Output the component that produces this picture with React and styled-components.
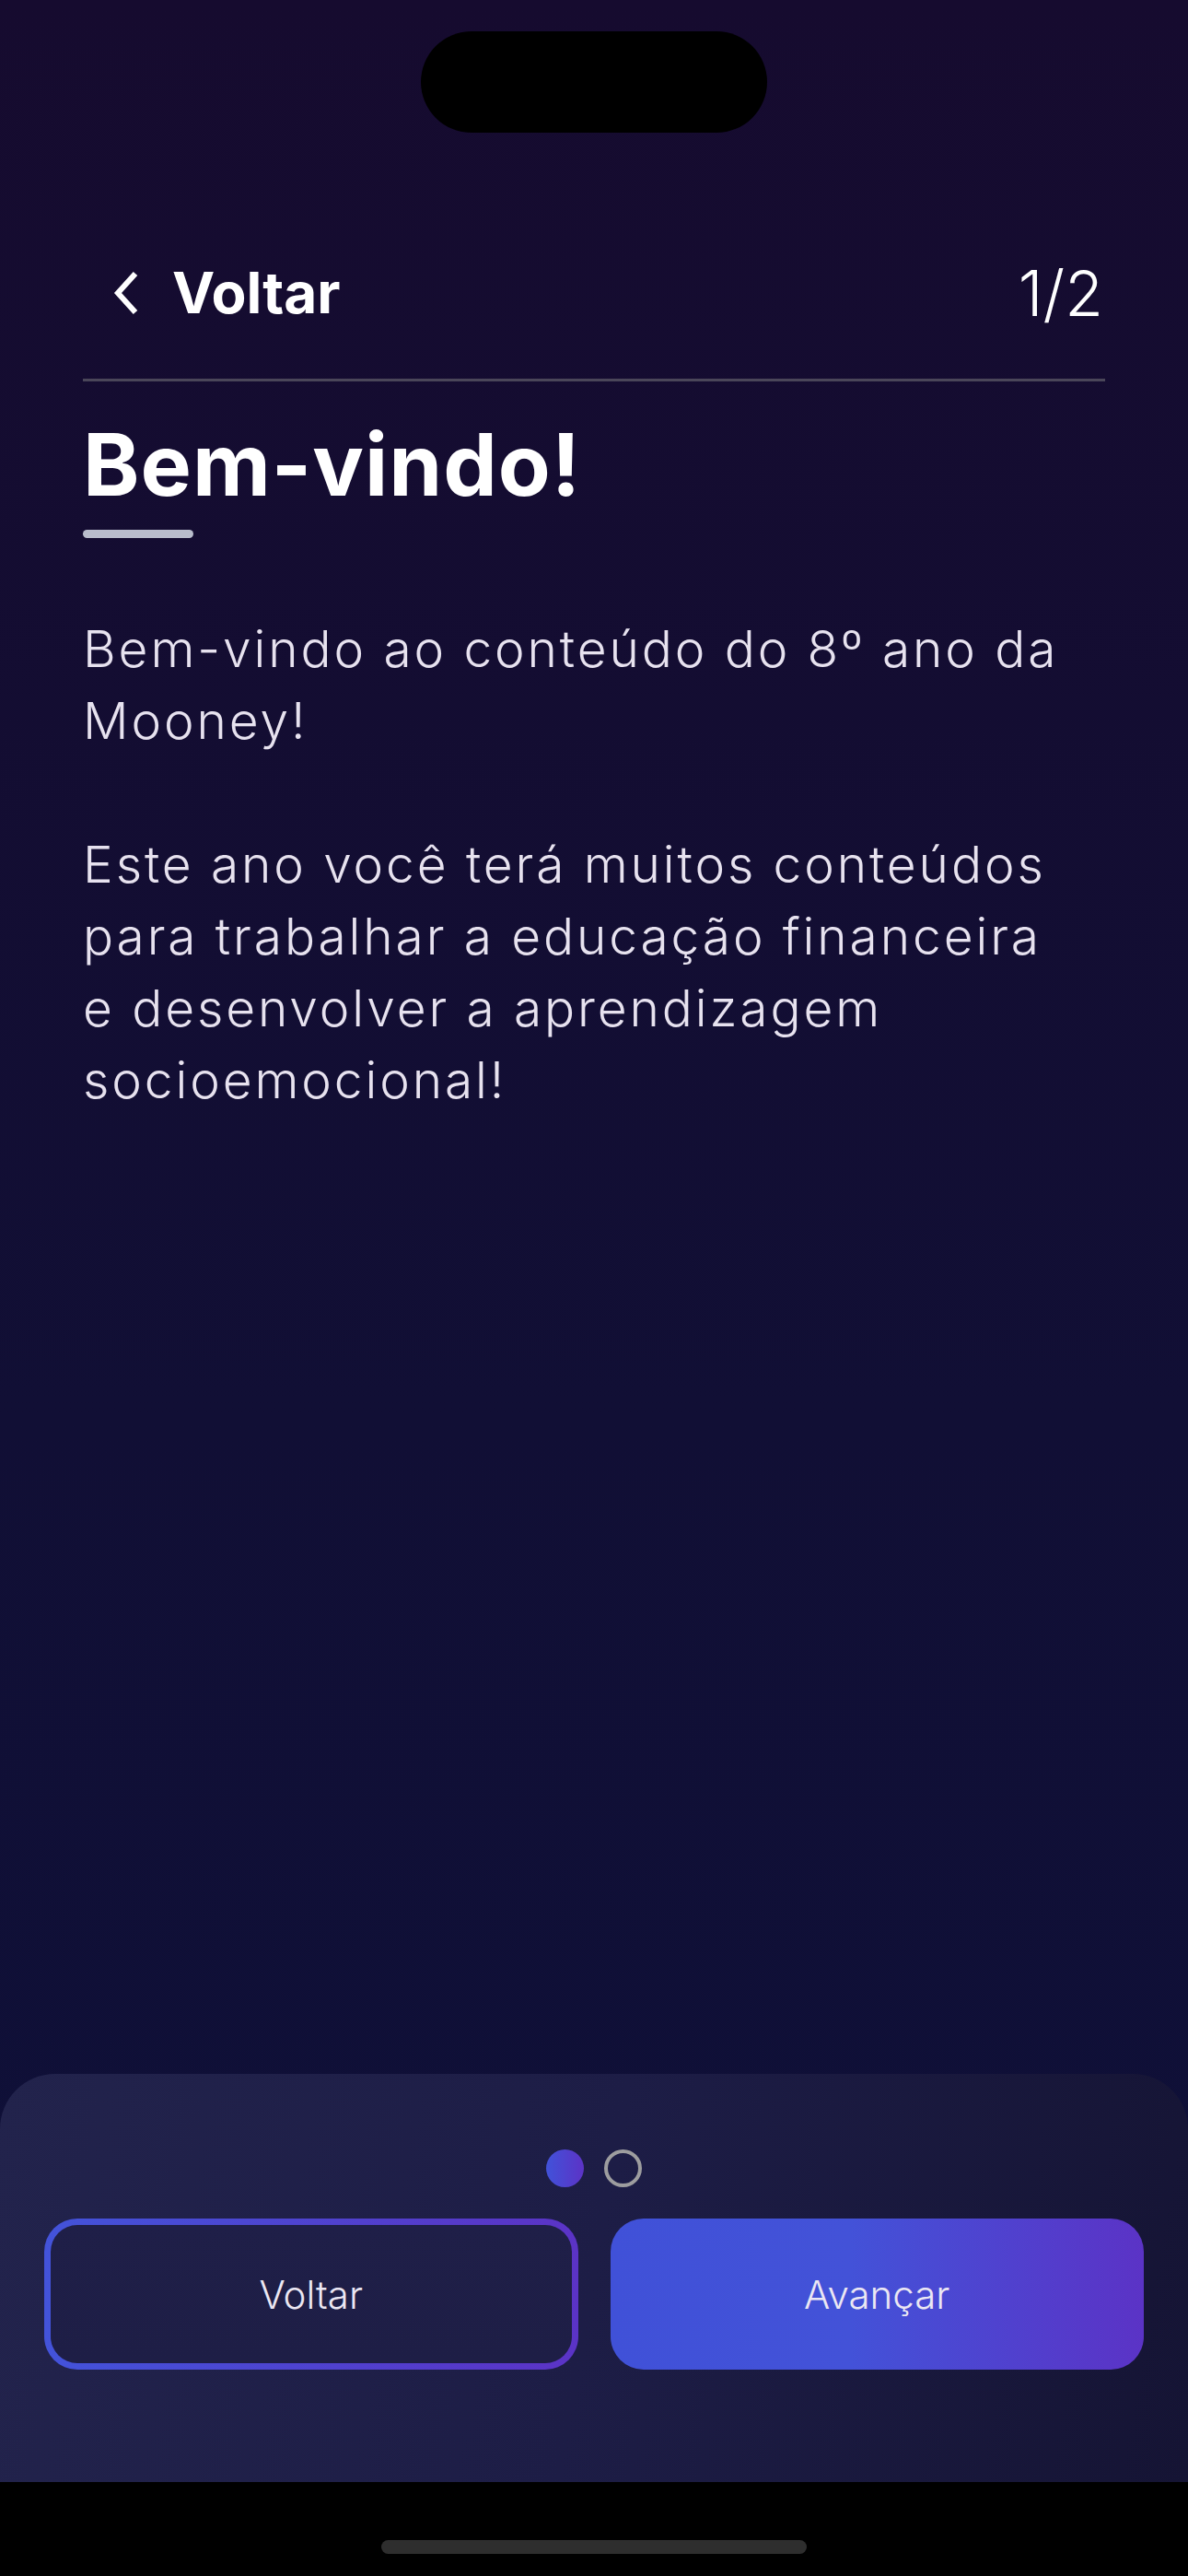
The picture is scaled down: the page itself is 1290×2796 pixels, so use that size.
import React from 'react';
import styled, { createGlobalStyle } from 'styled-components';

const GlobalStyle = createGlobalStyle`
  html, body {
    margin: 0;
    padding: 0;
    background: #000;
  }
  * {
    box-sizing: border-box;
  }
`;

const paragraphs = [
  'Bem-vindo ao conteúdo do 8º ano da\nMooney!',
  'Este ano você terá muitos conteúdos\npara trabalhar a educação financeira\ne desenvolver a aprendizagem\nsocioemocional!',
];

const App = () => {
  return (
    <Screen>
      <GlobalStyle />
      <TopBar>
        <Island />
      </TopBar>

      <Header>
        <BackLink>
          <svg width="28" height="48" viewBox="0 0 28 48" fill="none">
            <polyline points="24,3 5,24 24,45" stroke="#fff" strokeWidth="6" strokeLinejoin="miter" />
          </svg>
          <BackText>Voltar</BackText>
        </BackLink>
        <Counter>1/2</Counter>
      </Header>
      <Divider />

      <Content>
        <Title>Bem-vindo!</Title>
        <TitleBar />
        {paragraphs.map((p, i) => (
          <Paragraph key={i}>{p}</Paragraph>
        ))}
      </Content>

      <BottomPanel>
        <Dots>
          <Dot $active />
          <Dot />
        </Dots>
        <Actions>
          <OutlineButton>Voltar</OutlineButton>
          <FilledButton>Avançar</FilledButton>
        </Actions>
      </BottomPanel>

      <HomeArea>
        <HomeIndicator />
      </HomeArea>
    </Screen>
  );
};

export default App;

const Screen = styled.div`
  display: flex;
  flex-direction: column;
  width: 1290px;
  min-height: 2796px;
  background: linear-gradient(180deg, #160b2f 0%, #110f35 55%, #0e1039 100%);
  font-family: Inter, "Noto Sans", sans-serif;
  color: #fff;
`;

const TopBar = styled.div`
  display: flex;
  justify-content: center;
  height: 287px;
  padding-top: 34px;
`;

const Island = styled.div`
  width: 376px;
  height: 110px;
  border-radius: 55px;
  background: #000;
`;

const Header = styled.div`
  display: flex;
  justify-content: space-between;
  align-items: center;
  height: 62px;
  margin: 0 90px;
  padding: 0 2px 0 33px;
`;

const BackLink = styled.div`
  display: flex;
  align-items: center;
  gap: 36px;
`;

const BackText = styled.span`
  font-size: 62px;
  font-weight: 700;
  line-height: 62px;
`;

const Counter = styled.span`
  font-size: 68px;
  font-weight: 300;
  line-height: 62px;
`;

const Divider = styled.div`
  height: 3px;
  margin: 62px 90px 0;
  background: #4a4659;
`;

const Content = styled.div`
  flex: 1;
  display: flex;
  flex-direction: column;
  align-items: flex-start;
  padding: 35px 90px 0;
`;

const Title = styled.h1`
  margin: 0;
  font-size: 93px;
  font-weight: 700;
  line-height: 1.2;
  letter-spacing: 1px;
  color: #fff;
`;

const TitleBar = styled.div`
  width: 120px;
  height: 9px;
  margin-top: 14px;
  border-radius: 5px;
  background: #b9bdcc;
`;

const Paragraph = styled.p`
  margin: 81px 0 0;
  white-space: pre-line;
  font-size: 55px;
  font-weight: 300;
  line-height: 78px;
  letter-spacing: 2.9px;
  color: #e7e2ef;

  & + & {
    margin-top: 78px;
  }
`;

const BottomPanel = styled.div`
  display: flex;
  flex-direction: column;
  align-items: center;
  gap: 34px;
  height: 443px;
  padding: 82px 48px 0;
  border-radius: 60px 60px 0 0;
  background: linear-gradient(100deg, #22234c 0%, #1d1d46 50%, #151434 100%);
`;

const Dots = styled.div`
  display: flex;
  gap: 22px;
`;

const Dot = styled.div`
  width: 41px;
  height: 41px;
  border-radius: 50%;
  background: ${(p) => (p.$active ? 'linear-gradient(90deg, #4152d9, #5c33c6)' : 'transparent')};
  border: ${(p) => (p.$active ? 'none' : '4px solid #9d9d9f')};
`;

const Actions = styled.div`
  display: grid;
  grid-template-columns: 1fr 1fr;
  gap: 35px;
  width: 100%;
`;

const BaseButton = styled.button`
  height: 164px;
  padding: 0;
  border-radius: 36px;
  font-family: Inter, "Noto Sans", sans-serif;
  font-size: 42px;
  font-weight: 300;
  color: #ebe7f3;
  cursor: pointer;
`;

const OutlineButton = styled(BaseButton)`
  border: 7px solid transparent;
  background:
    linear-gradient(#1f1f48, #1e1e46) padding-box,
    linear-gradient(90deg, #4353da, #5b33c6) border-box;
`;

const FilledButton = styled(BaseButton)`
  border: none;
  background: linear-gradient(90deg, #4051d8 0%, #4352d8 45%, #5b33c6 100%);
`;

const HomeArea = styled.div`
  display: flex;
  justify-content: center;
  height: 102px;
  padding-top: 63px;
  background: #000;
`;

const HomeIndicator = styled.div`
  width: 462px;
  height: 15px;
  border-radius: 8px;
  background: #2e2e2e;
`;
